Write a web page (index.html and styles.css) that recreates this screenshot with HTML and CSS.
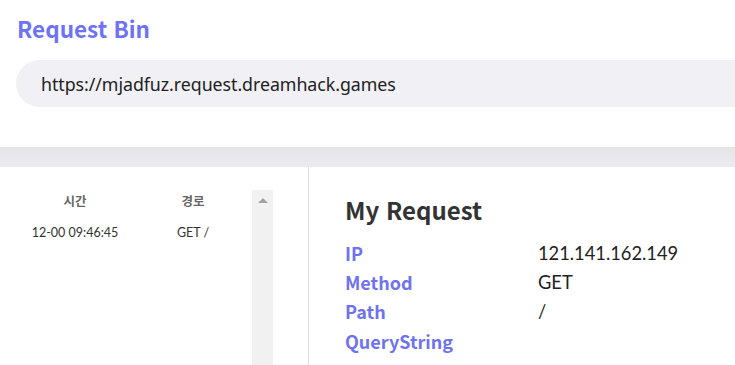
FILE: index.html
```html
<!DOCTYPE html>
<html lang="ko">
<head>
<meta charset="utf-8">
<title>Request Bin</title>
<link rel="stylesheet" href="styles.css">
</head>
<body>
<header class="top">
  <h1 class="brand">Request Bin</h1>
  <div class="url">https://mjadfuz.request.dreamhack.games</div>
</header>
<div class="band"></div>
<main class="main">
  <aside class="list">
    <div class="table">
      <div class="row head">
        <div class="cell">시간</div>
        <div class="cell">경로</div>
      </div>
      <div class="row item">
        <div class="cell">12-00 09:46:45</div>
        <div class="cell">GET /</div>
      </div>
    </div>
    <div class="scrollbar"><span class="arrow"></span></div>
  </aside>
  <section class="detail">
    <h2 class="title">My Request</h2>
    <dl class="props">
      <dt>IP</dt><dd>121.141.162.149</dd>
      <dt>Method</dt><dd>GET</dd>
      <dt>Path</dt><dd>/</dd>
      <dt>QueryString</dt><dd></dd>
    </dl>
  </section>
</main>
</body>
</html>
```
FILE: styles.css
```css
* { box-sizing: border-box; }
html, body { margin: 0; padding: 0; background: #fff; }
body {
  width: 735px;
  height: 365px;
  overflow: hidden;
  font-family: "Noto Sans", "Noto Sans CJK KR", sans-serif;
  color: #333;
}
.top {
  height: 147px;
  padding: 13px 0 0 16px;
}
.brand {
  margin: 0 0 0 1px;
  font-family: "Noto Sans CJK KR", "Noto Sans", sans-serif;
  font-weight: 700;
  font-size: 22.5px;
  line-height: 30px;
  color: #6e72f7;
}
.url {
  margin-top: 17px;
  height: 47px;
  border-radius: 24px 0 0 24px;
  background: #f0f0f5;
  padding-left: 25px;
  font-family: "Noto Sans", sans-serif;
  font-size: 17.8px;
  letter-spacing: -0.05px;
  line-height: 49px;
  color: #222;
}
.band {
  height: 20px;
  background: linear-gradient(#e5e4e9, #ecebf0);
}
.main {
  display: flex;
  height: 198px;
}
.list {
  width: 309px;
  border-right: 1px solid #dcdce4;
  display: flex;
  padding-top: 23px;
}
.table {
  width: 252px;
}
.row {
  display: grid;
  grid-template-columns: 150px 86px;
}
.cell { text-align: center; }
.head .cell {
  font-family: "Noto Sans CJK KR", sans-serif;
  font-weight: 700;
  font-size: 12.5px;
  line-height: 22px;
  color: #666;
}
.item { margin-top: 10px; }
.item .cell {
  font-family: Lato, sans-serif;
  font-size: 12.5px;
  line-height: 22px;
  color: #333;
}
.scrollbar {
  width: 21px;
  background: #f1f1f1;
  display: flex;
  justify-content: center;
  padding-top: 8px;
}
.arrow {
  width: 0;
  height: 0;
  border-left: 5px solid transparent;
  border-right: 5px solid transparent;
  border-bottom: 5px solid #a3a3a3;
}
.detail {
  padding: 26px 0 0 37px;
}
.title {
  margin: 0 0 0 -1px;
  font-family: "Noto Sans CJK KR", "Noto Sans", sans-serif;
  font-weight: 700;
  font-size: 24px;
  line-height: 34px;
  color: #333;
}
.props {
  margin: 11px 0 0;
  display: grid;
  grid-template-columns: 192px auto;
  grid-auto-rows: 29.4px;
  align-items: center;
}
.props dt {
  margin-left: -1px;
  font-family: "Noto Sans CJK KR", "Noto Sans", sans-serif;
  font-weight: 700;
  font-size: 18px;
  color: #6e72f0;
}
.props dd {
  margin: 0;
  font-family: Lato, sans-serif;
  font-size: 18.3px;
  color: #222;
}
```
